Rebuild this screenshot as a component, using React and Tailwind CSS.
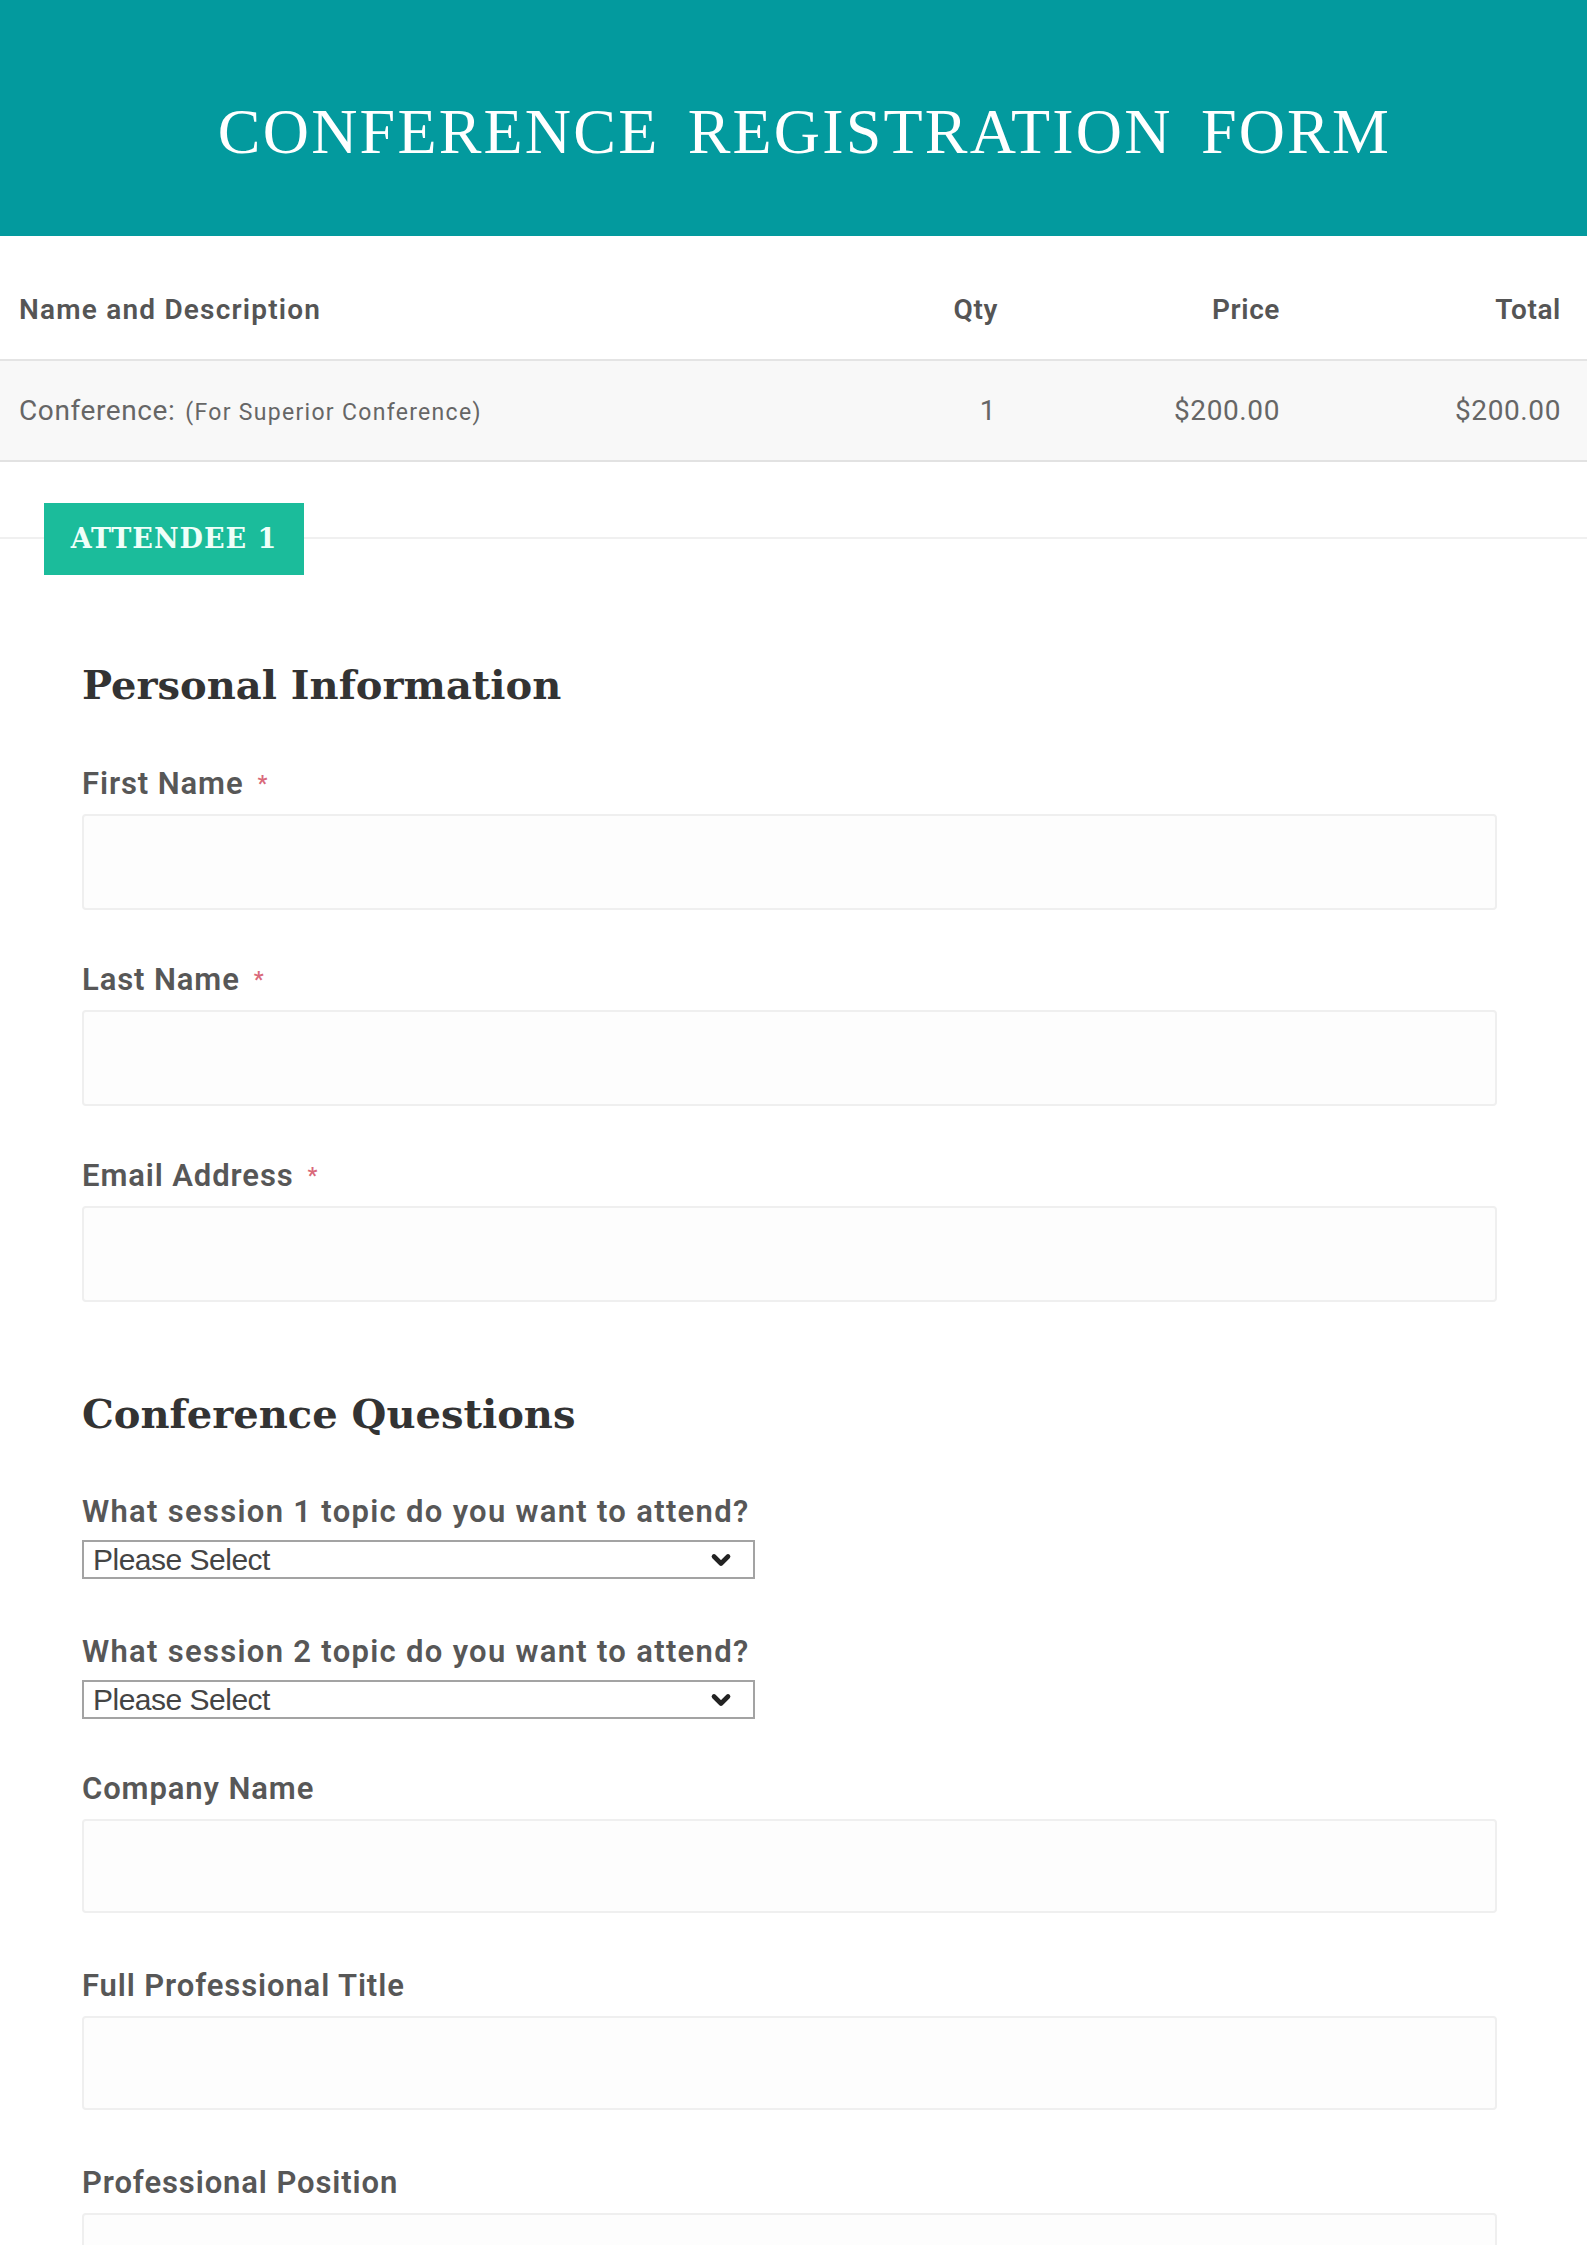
import { ChevronDown } from 'lucide-react'

const sans = { fontFamily: 'Roboto, "Liberation Sans", sans-serif' }
const slab = { fontFamily: '"DejaVu Serif", "Liberation Serif", serif' }

function Field({ label, required, tall = 'h-[96px]' }) {
  return (
    <div className="flex flex-col">
      <label className="flex items-center text-[31px] leading-[34px] font-semibold tracking-[0.9px] text-[#575757]" style={sans}>
        {label}
        {required && <span className="ml-[14px] text-[22px] text-[#d9697a]">*</span>}
      </label>
      <div className={`mt-[13px] ${tall} w-[1415px] rounded-[4px] border-2 border-[#efefef] bg-[#fdfdfd]`} />
    </div>
  )
}

function Question({ label }) {
  return (
    <div className="flex flex-col">
      <label className="text-[31px] leading-[34px] font-semibold tracking-[1.3px] text-[#575757]" style={sans}>
        {label}
      </label>
      <div className="mt-[11px] flex h-[39px] w-[673px] items-center justify-between border-2 border-[#a3a3a3] bg-white pl-[9px] pr-[18px]">
        <span className="text-[30px] leading-none tracking-[-0.5px] text-[#444]" style={{ fontFamily: '"Liberation Sans", Arial, sans-serif' }}>
          Please Select
        </span>
        <ChevronDown className="h-[28px] w-[28px] text-[#222]" strokeWidth={4} />
      </div>
    </div>
  )
}

export default function App() {
  return (
    <div className="h-[2245px] w-[1587px] overflow-hidden bg-white">
      {/* Title band */}
      <div className="flex h-[236px] items-center justify-center bg-[#039a9e] pl-[22px] pt-[28px]">
        <h1
          className="text-[64px] leading-none text-white"
          style={{ fontFamily: '"Liberation Serif", serif', letterSpacing: '2.2px', wordSpacing: '10px' }}
        >
          CONFERENCE REGISTRATION FORM
        </h1>
      </div>

      {/* Order table */}
      <div style={sans}>
        <div className="flex h-[125px] items-center border-b-2 border-[#e4e4e4] pl-[19px] pr-[26px] pt-[24px] text-[28px] font-semibold tracking-[0.6px] text-[#555]">
          <div className="flex-1 tracking-[1.2px]">Name and Description</div>
          <div className="w-[80px] text-right">Qty</div>
          <div className="w-[282px] text-right">Price</div>
          <div className="w-[281px] text-right">Total</div>
        </div>
        <div className="flex h-[101px] items-center border-b-2 border-[#e2e2e2] bg-[#f8f8f8] pl-[19px] pr-[26px] text-[28px] tracking-[0.6px] text-[#666]">
          <div className="flex flex-1 items-baseline">
            <span>Conference:</span>
            <span className="ml-[10px] text-[23px] tracking-[1.3px]">(For Superior Conference)</span>
          </div>
          <div className="w-[80px] pr-[2px] text-right">1</div>
          <div className="w-[282px] text-right">$200.00</div>
          <div className="w-[281px] text-right">$200.00</div>
        </div>
      </div>

      {/* Attendee divider */}
      <div className="relative mt-[41px] h-[72px]">
        <div className="absolute left-0 right-0 top-[34px] h-[2px] bg-[#f0f0f0]" />
        <div
          className="absolute left-[44px] top-0 flex h-[72px] w-[260px] items-center justify-center bg-[#1bbc9b] text-[27px] font-bold tracking-[1px] text-[#effff9]"
          style={slab}
        >
          ATTENDEE 1
        </div>
      </div>

      <div className="pl-[82px]">
        <h2 className="mt-[84px] text-[40px] leading-[52px] font-bold text-[#333]" style={slab}>
          Personal Information
        </h2>

        <div className="mt-[56px] flex flex-col gap-[53px]">
          <Field label="First Name" required />
          <Field label="Last Name" required />
          <Field label="Email Address" required />
        </div>

        <h2 className="mt-[86px] text-[40px] leading-[52px] font-bold text-[#333]" style={slab}>
          Conference Questions
        </h2>

        <div className="mt-[55px] flex flex-col gap-[56px]">
          <Question label="What session 1 topic do you want to attend?" />
          <Question label="What session 2 topic do you want to attend?" />
        </div>

        <div className="mt-[53px] flex flex-col gap-[56px]">
          <Field label="Company Name" tall="h-[94px]" />
          <Field label="Full Professional Title" tall="h-[94px]" />
          <Field label="Professional Position" tall="h-[94px]" />
        </div>
      </div>
    </div>
  )
}
